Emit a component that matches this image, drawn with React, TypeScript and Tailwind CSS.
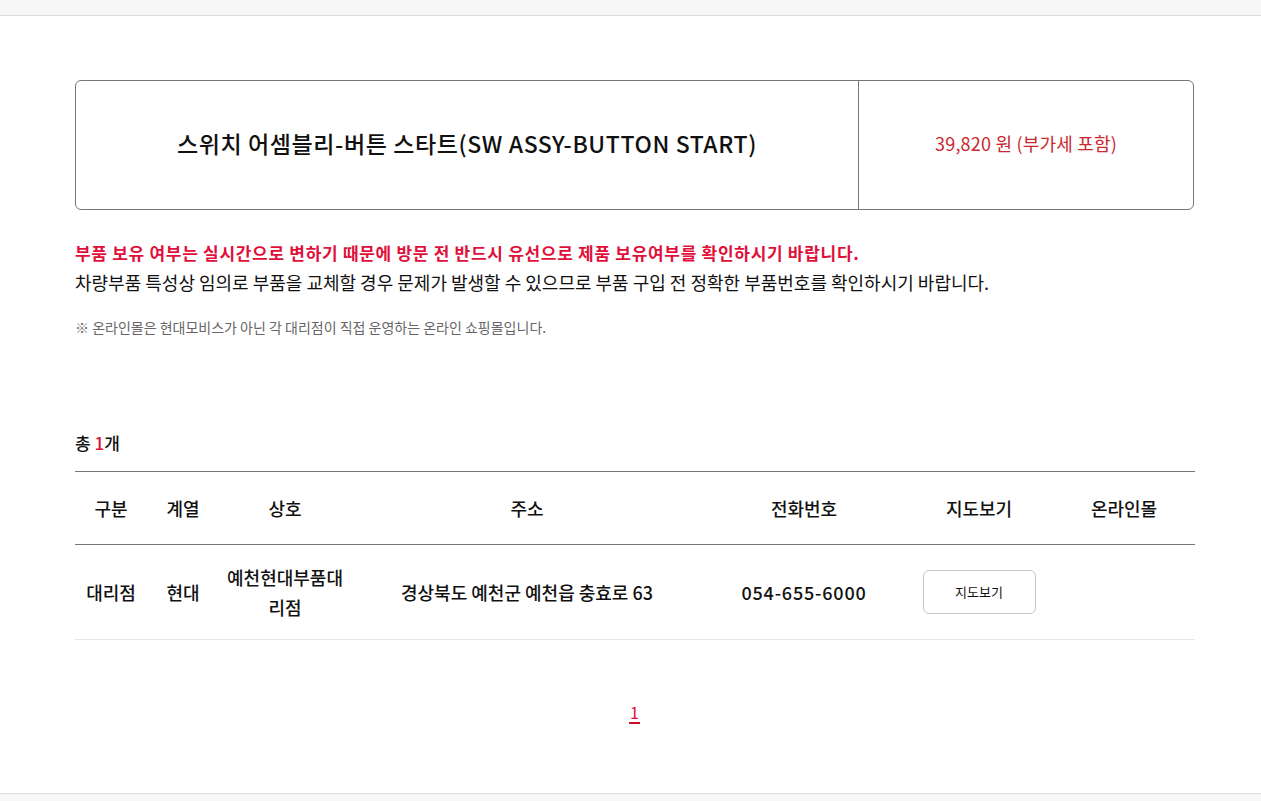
export default function App() {
  const rows = [
    {
      type: "대리점",
      series: "현대",
      name: "예천현대부품대리점",
      address: "경상북도 예천군 예천읍 충효로 63",
      phone: "054-655-6000",
    },
  ]

  return (
    <div
      className="min-h-screen bg-white text-[#111] flex flex-col"
      style={{ fontFamily: '"Noto Sans CJK KR", "Noto Sans", sans-serif' }}
    >
      {/* Top strip */}
      <div className="h-[16px] bg-[#f7f7f7] border-b border-[#dcdcdc]" />

      <main className="flex-1 px-[75px] pt-[64px]">
        {/* Product box */}
        <div className="flex h-[130px] w-[1119px] border border-[#777] rounded-[6px]">
          <div className="w-[783px] flex items-center justify-center border-r border-[#777] pb-[4px]">
            <h1 className="text-[23px] font-medium tracking-[0.6px]">
              스위치 어셈블리-버튼 스타트(SW ASSY-BUTTON START)
            </h1>
          </div>
          <div className="flex-1 flex items-center justify-center pb-[4px]">
            <span className="text-[18px] text-[#c8282e] tracking-[0.2px]">39,820 원 (부가세 포함)</span>
          </div>
        </div>

        {/* Notices */}
        <div className="mt-[29px]">
          <p className="text-[17px] font-bold text-[#e0103a] leading-[28px] tracking-[0.7px]">
            부품 보유 여부는 실시간으로 변하기 때문에 방문 전 반드시 유선으로 제품 보유여부를 확인하시기 바랍니다.
          </p>
          <p className="text-[18px] leading-[30px]">
            차량부품 특성상 임의로 부품을 교체할 경우 문제가 발생할 수 있으므로 부품 구입 전 정확한 부품번호를 확인하시기 바랍니다.
          </p>
          <p className="mt-[20px] text-[14px] leading-[20px] text-[#666]">
            ※ 온라인몰은 현대모비스가 아닌 각 대리점이 직접 운영하는 온라인 쇼핑몰입니다.
          </p>
        </div>

        {/* Count */}
        <div className="mt-[94px] text-[17px] leading-[24px] font-medium">
          총 <span className="text-[#e0103a]">1</span>개
        </div>

        {/* Table */}
        <table className="mt-[16px] w-[1120px] table-fixed border-collapse text-center">
          <colgroup>
            <col className="w-[72px]" />
            <col className="w-[72px]" />
            <col className="w-[132px]" />
            <col className="w-[352px]" />
            <col className="w-[202px]" />
            <col className="w-[148px]" />
            <col className="w-[142px]" />
          </colgroup>
          <thead>
            <tr className="h-[73px] border-t border-b border-[#777]">
              {["구분", "계열", "상호", "주소", "전화번호", "지도보기", "온라인몰"].map((h) => (
                <th key={h} className="text-[18px] font-medium">
                  {h}
                </th>
              ))}
            </tr>
          </thead>
          <tbody>
            {rows.map((r) => (
              <tr key={r.name} className="h-[95px] border-b border-[#e6e6e6] text-[18px] font-medium">
                <td>{r.type}</td>
                <td>{r.series}</td>
                <td className="px-[6px] leading-[30px]">{r.name}</td>
                <td>{r.address}</td>
                <td className="tracking-[0.8px]">{r.phone}</td>
                <td>
                  <button className="w-[113px] h-[44px] rounded-[6px] border border-[#c8c8c8] bg-white text-[13px] font-normal">
                    지도보기
                  </button>
                </td>
                <td></td>
              </tr>
            ))}
          </tbody>
        </table>

        {/* Pagination */}
        <div className="mt-[62px] flex justify-center">
          <span className="text-[16px] text-[#e0103a] border-b-2 border-[#c8102e] leading-[20px] px-[1px] ml-[8px]">
            1
          </span>
        </div>
      </main>

      {/* Bottom strip */}
      <div className="h-[8px] bg-[#f7f7f7] border-t border-[#dcdcdc]" />
    </div>
  )
}
